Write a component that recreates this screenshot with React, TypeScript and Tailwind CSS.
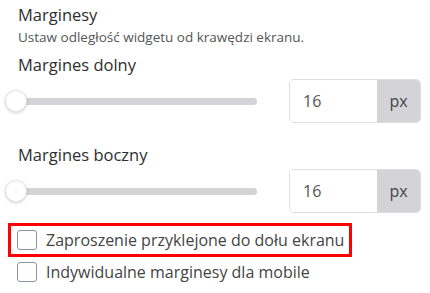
import React from "react";

const font = { fontFamily: '"Open Sans", "Noto Sans", sans-serif' };

const SliderRow: React.FC<{ label: string; value: number }> = ({ label, value }) => (
  <div>
    <h3 className="pl-[18px] text-[16.5px] font-medium leading-6 text-[#2e2e2e]">{label}</h3>
    <div className="mt-[2px] flex items-center">
      <div className="relative ml-[5px] h-[7px] w-[252px] rounded-full bg-[#d3d3d8]">
        <div className="absolute left-0 top-1/2 h-[22px] w-[22px] -translate-y-1/2 rounded-full border border-[#e6e6e6] bg-white shadow-[0_1px_3px_rgba(0,0,0,0.18)]" />
      </div>
      <div className="ml-[32px] flex h-[44px] w-[132px] overflow-hidden rounded-[5px] border border-[#dedede]">
        <div className="flex flex-1 items-center bg-white pl-[13px] text-[16px] text-[#555]">{value}</div>
        <div className="flex w-[43px] items-center justify-center bg-[#d4d4d8] text-[16px] text-[#444]">px</div>
      </div>
    </div>
  </div>
);

const Checkbox: React.FC<{ label: string }> = ({ label }) => (
  <label className="flex h-[20px] items-center gap-[9px]">
    <span className="h-[20px] w-[20px] rounded-[3px] border-[1.5px] border-[#8a93a3] bg-white" />
    <span className="text-[16px] leading-5 text-[#444]">{label}</span>
  </label>
);

export default function App() {
  return (
    <div className="h-[293px] w-[430px] bg-white pt-[3px]" style={font}>
      <h2 className="pl-[18px] text-[16.5px] font-medium leading-6 text-[#2e2e2e]">Marginesy</h2>
      <p className="pl-[18px] text-[13.5px] leading-5 text-[#555]">Ustaw odległość widgetu od krawędzi ekranu.</p>
      <div className="mt-[6px]">
        <SliderRow label="Margines dolny" value={16} />
      </div>
      <div className="mt-[20px]">
        <SliderRow label="Margines boczny" value={16} />
      </div>
      <div className="mt-[10px] ml-[8px] w-[344px] border-[3px] border-[#ff0000] py-[4px] pl-[6px]">
        <Checkbox label="Zaproszenie przyklejone do dołu ekranu" />
      </div>
      <div className="mt-[5px] pl-[17px]">
        <Checkbox label="Indywidualne marginesy dla mobile" />
      </div>
    </div>
  );
}
